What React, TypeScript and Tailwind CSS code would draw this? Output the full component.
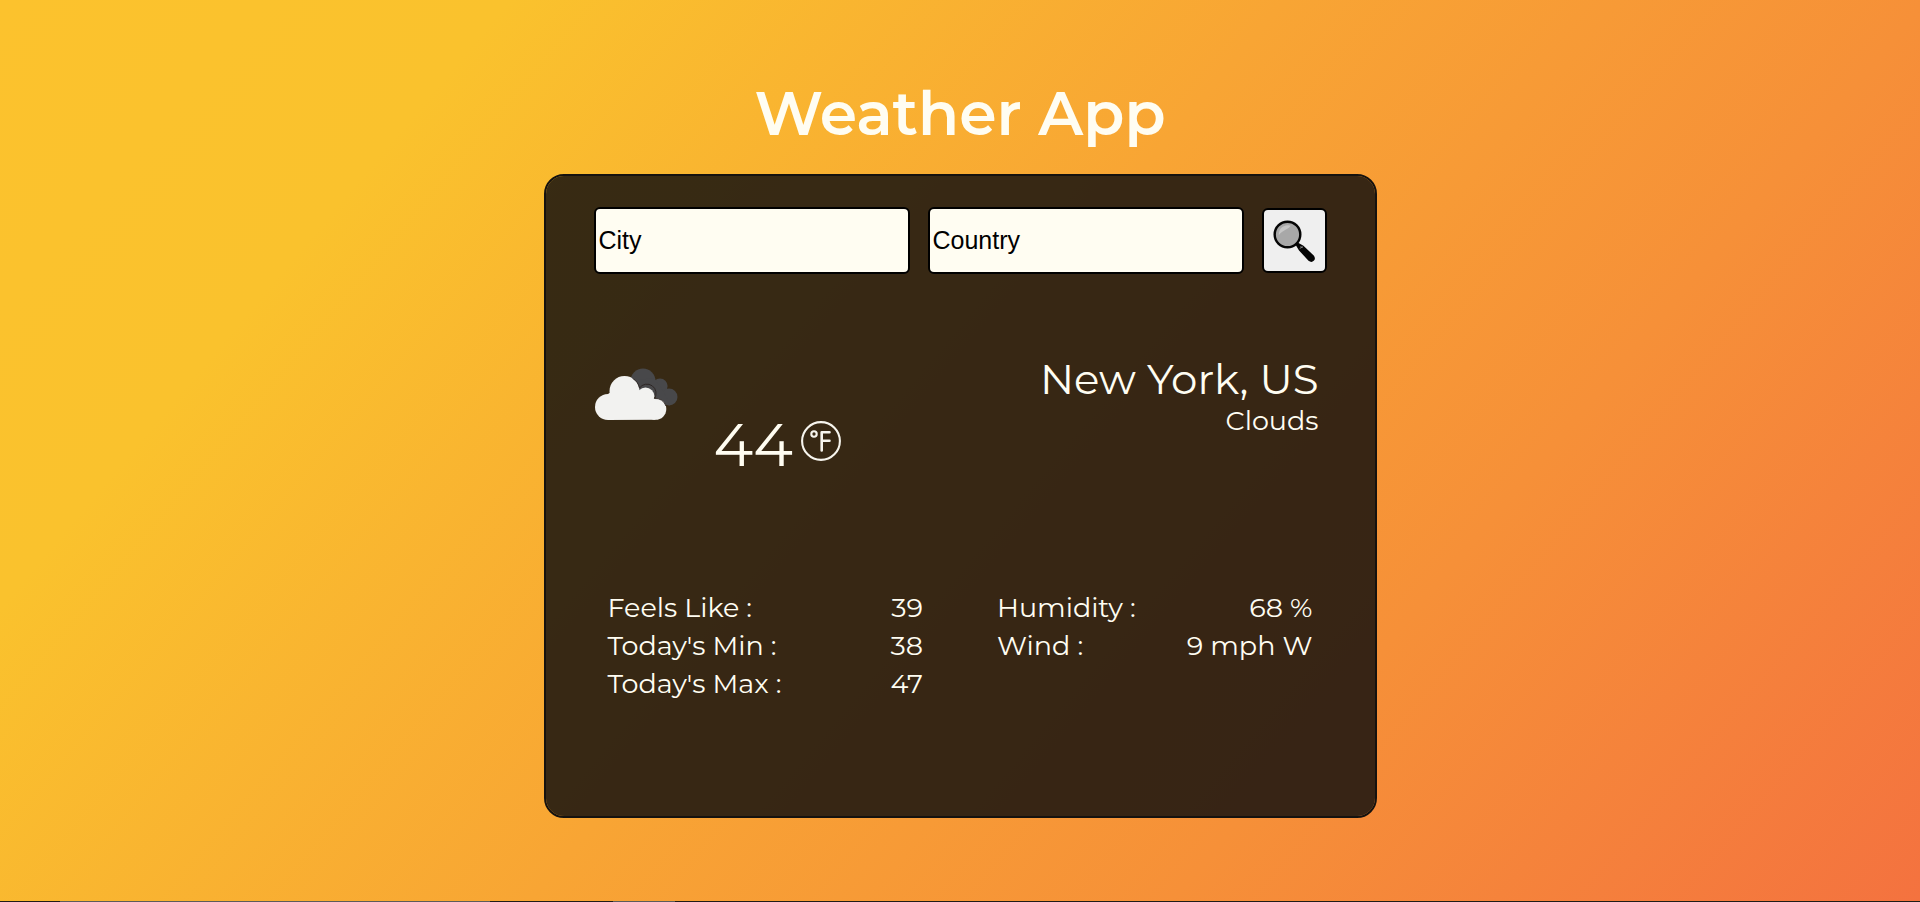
import React from "react";

type Row = { label: string; value: string };

const temperatures: Row[] = [
  { label: "Feels Like :", value: "39" },
  { label: "Today's Min :", value: "38" },
  { label: "Today's Max :", value: "47" },
];

const conditions: Row[] = [
  { label: "Humidity :", value: "68 %" },
  { label: "Wind :", value: "9 mph W" },
];

function SearchIcon() {
  return (
    <svg viewBox="0 0 40 40" className="size-[42px]" aria-hidden="true">
      <path d="M21.5 23.5 L23.5 21.5 L29 24.6 L38.8 33.8 Q41 36.8 38.8 38.8 Q36.8 41 33.8 38.8 L24.8 29 Z" fill="#050505" />
      <path d="M25.5 27 L28.5 25.5 M26.2 24.8 L28 26.6" stroke="#8a8a8a" strokeWidth="0.9" />
      <circle cx="13.8" cy="13.8" r="12.2" fill="#a8a8a8" stroke="#050505" strokeWidth="2.3" />
      <path d="M5.5 14.5 A8.8 8.8 0 0 1 16.5 5.2 C17 7.5 8.5 10 5.5 14.5 Z" fill="#c6c6c6" />
    </svg>
  );
}

function CloudsIcon() {
  return (
    <svg viewBox="0 0 84 53" className="h-[53px] w-[84px]" aria-hidden="true">
      <g fill="#48484a">
        <circle cx="49" cy="13" r="12.5" />
        <circle cx="66" cy="18" r="7.6" />
        <circle cx="75" cy="29" r="8.5" />
        <path d="M44 12 L60 10 L70 24 L76 37.4 L66 34 Z" />
      </g>
      <g fill="#f2f2f0">
        <circle cx="14" cy="39" r="13" />
        <circle cx="30.5" cy="23" r="15" />
        <circle cx="51.5" cy="28.5" r="9" />
        <circle cx="61.5" cy="41" r="10.8" />
        <path d="M14 52 L14 26 L17 24 L44 22 L58 28 L61.5 51.8 Z" />
      </g>
      <path
        d="M38.5 10.3 A15 15 0 0 1 45.500 20 A9 9 0 0 1 60.400 30.5 A10.8 10.8 0 0 1 72 38"
        fill="none"
        stroke="#2a2320"
        strokeWidth="0.9"
      />
    </svg>
  );
}

function FahrenheitIcon() {
  return (
    <svg viewBox="0 0 40 40" className="size-10" fill="none" stroke="#f7f5ee" role="img" aria-label="Fahrenheit">
      <circle cx="20" cy="20" r="18.9" strokeWidth="2.1" />
      <circle cx="13" cy="13" r="2.7" strokeWidth="2.1" />
      <path d="M28.5 11.3 H20.7 V29.5 M20.7 19.8 H28.5" strokeWidth="2.6" strokeLinecap="round" strokeLinejoin="round" />
    </svg>
  );
}

function Details({ rows }: { rows: Row[] }) {
  return (
    <dl className="flex-1">
      {rows.map((row) => (
        <div key={row.label} className="flex justify-between">
          <dt>{row.label}</dt>
          <dd>{row.value}</dd>
        </div>
      ))}
    </dl>
  );
}

const fieldClass =
  "h-[67px] w-full min-w-0 flex-1 rounded-md border-2 border-black bg-[#fffdf2] px-[3px] font-['Liberation_Sans',sans-serif] text-[25px] text-black placeholder:text-black placeholder:opacity-100";

export default function App() {
  return (
    <div className="flex min-h-screen flex-col bg-[linear-gradient(130deg,#fcc22d_0%,#fac22d_19%,#f8a534_48%,#f69038_72%,#f4723f_100%)] font-[Montserrat,Inter,sans-serif] text-[#fffdf2]">
      <main className="flex flex-1 flex-col items-center px-4 pt-[78px]">
        <h1 className="text-[60px] leading-[72px] font-semibold">Weather App</h1>
        <section className="mt-6 w-full max-w-[833px] rounded-[20px] border-2 border-[#15120f] bg-[#17130f]/86 bg-clip-padding px-12 pt-[31px] pb-[113px]">
          <form className="flex items-center gap-[18px]" onSubmit={(e) => e.preventDefault()}>
            <input type="text" aria-label="City" placeholder="City" className={fieldClass} />
            <input type="text" aria-label="Country" placeholder="Country" className={fieldClass} />
            <button
              type="submit"
              aria-label="Search"
              className="flex size-[65px] shrink-0 items-center justify-center rounded-md border-2 border-black bg-[#efefef]"
            >
              <SearchIcon />
            </button>
          </form>

          <div className="mt-[79px] flex justify-between pr-2">
            <div className="flex items-start gap-9 pt-[15px]">
              <CloudsIcon />
              <div className="flex items-start gap-2 pt-[41px]">
                <span className="text-[60px] leading-[72px]">44</span>
                <div className="pt-3">
                  <FahrenheitIcon />
                </div>
              </div>
            </div>
            <div className="text-right">
              <h2 className="text-[42px] leading-[52px]">New York, US</h2>
              <p className="text-[27px] leading-8">Clouds</p>
            </div>
          </div>

          <div className="mt-[108px] flex gap-[74px] px-[14px] text-[27px] leading-[38px]">
            <Details rows={temperatures} />
            <Details rows={conditions} />
          </div>
        </section>
      </main>
      <footer className="flex h-px w-full bg-[#1f1c18]">
        <span className="w-[60px]" />
        <span className="w-[430px] bg-[#5c5c5a]" />
        <span className="w-[123px]" />
        <span className="w-[62px] bg-[#5c5c5a]" />
      </footer>
    </div>
  );
}
